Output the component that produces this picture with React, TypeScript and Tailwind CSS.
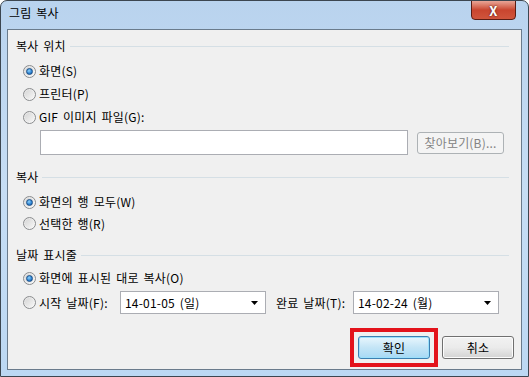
import React from 'react';

const font = { fontFamily: '"Noto Sans CJK KR", "Noto Sans", sans-serif' };

const Radio = ({ checked }: { checked?: boolean }) => (
  <span className="relative flex h-[13px] w-[13px] shrink-0 items-center justify-center rounded-full border border-[#8a8c8e] bg-gradient-to-br from-[#e2e2e2] to-[#fbfbfb]">
    <span className="h-[9px] w-[9px] rounded-full bg-gradient-to-br from-[#d6d6d6] to-[#f6f6f6]" />
    {checked && (
      <span className="absolute h-[7px] w-[7px] rounded-full border border-[#1c4f86] bg-[radial-gradient(circle_at_40%_35%,#8fd3fb,#2a7fd0_60%,#14539c)]" />
    )}
  </span>
);

const RadioRow = ({ label, checked, h = 'h-[22px]', mt }: { label: string; checked?: boolean; h?: string; mt: string }) => (
  <div className={`flex ${h} ${mt} items-center gap-[3px] pl-[15px]`}>
    <Radio checked={checked} />
    <span className="leading-none">{label}</span>
  </div>
);

const Header = ({ label, mt }: { label: string; mt: string }) => (
  <div className={`flex h-[22px] ${mt} items-center gap-[4px] pl-[8px] pr-[12px]`}>
    <span className="leading-none">{label}</span>
    <div className="h-px flex-1 bg-[#d5dfe5]" />
  </div>
);

const Combo = ({ value, w }: { value: string; w: string }) => (
  <div className={`flex h-[23px] ${w} items-center justify-between border border-[#abadb3] bg-white pl-[4px] pr-[7px]`}>
    <span className="leading-none">{value}</span>
    <svg width="7" height="4" viewBox="0 0 7 4">
      <path d="M0 0h7L3.5 4z" fill="#000" />
    </svg>
  </div>
);

export default function App() {
  return (
    <div
      style={font}
      className="flex h-[377px] w-[529px] flex-col overflow-hidden rounded-t-[7px] border border-[#3c4650] bg-gradient-to-b from-[#b9d3ee] via-[#c6ddf4] to-[#bcd8f3] text-[12px] tracking-[0.2px] text-black [word-spacing:2px]"
    >
      <div className="flex h-[28px] shrink-0 items-start justify-between">
        <span className="mt-[6px] pl-[8px] leading-none text-[#000]">그림 복사</span>
        <div className="mr-[12px] mt-[-1px] flex h-[20px] w-[45px] items-center justify-center rounded-b-[4px] border border-[#5a1d14] bg-gradient-to-b from-[#e8a597] via-[#c9452f] to-[#d0553c]">
          <span className="text-[13px] font-bold leading-none text-white [text-shadow:0_0_2px_#3a0d08]">X</span>
        </div>
      </div>

      <div className="mx-[6px] mb-[6px] flex flex-1 flex-col border border-[#6a7b8c] bg-[#f0f0f0]">
        <Header label="복사 위치" mt="mt-[5px]" />
        <RadioRow label="화면(S)" checked mt="mt-[3px]" />
        <RadioRow label="프린터(P)" mt="mt-[1px]" />
        <RadioRow label="GIF 이미지 파일(G):" mt="mt-[1px]" />
        <div className="mt-[2px] flex h-[25px] items-center gap-[9px] pl-[32px]">
          <div className="h-[25px] w-[368px] border border-[#abadb3] bg-white" />
          <div className="flex h-[22px] w-[87px] items-center justify-center rounded-[3px] border border-[#adb2b5] bg-[#f4f4f4] text-[#838383]">
            <span className="leading-none">찾아보기(B)...</span>
          </div>
        </div>

        <Header label="복사" mt="mt-[11px]" />
        <RadioRow label="화면의 행 모두(W)" checked mt="mt-[3px]" />
        <RadioRow label="선택한 행(R)" h="h-[21px]" mt="mt-0" />

        <Header label="날짜 표시줄" mt="mt-[10px]" />
        <RadioRow label="화면에 표시된 대로 복사(O)" checked mt="mt-[1px]" />
        <div className="mt-[2px] flex h-[23px] items-center pl-[15px]">
          <Radio />
          <span className="ml-[3px] w-[81px] leading-none">시작 날짜(F):</span>
          <Combo value="14-01-05 (일)" w="w-[146px]" />
          <span className="ml-[10px] w-[77px] leading-none">완료 날짜(T):</span>
          <Combo value="14-02-24 (월)" w="w-[146px]" />
        </div>

        <div className="mt-[22px] flex items-center justify-end gap-[12px] pr-[7px]">
          <div className="relative">
            <div className="flex h-[23px] w-[72px] items-center justify-center rounded-[3px] border border-[#3c7fb1] bg-gradient-to-b from-[#e9f6fd] via-[#c4e5f6] to-[#a7d9f5] shadow-[inset_0_0_0_1px_#9be0fb]">
              <span className="leading-none">확인</span>
            </div>
            <div className="absolute -inset-[8px] border-[4px] border-[#e3131b]" />
          </div>
          <div className="flex h-[23px] w-[72px] items-center justify-center rounded-[3px] border border-[#707070] bg-gradient-to-b from-[#f2f2f2] via-[#ebebeb] to-[#d3d3d3] shadow-[inset_0_0_0_1px_#fcfcfc]">
            <span className="leading-none">취소</span>
          </div>
        </div>
      </div>
    </div>
  );
}
